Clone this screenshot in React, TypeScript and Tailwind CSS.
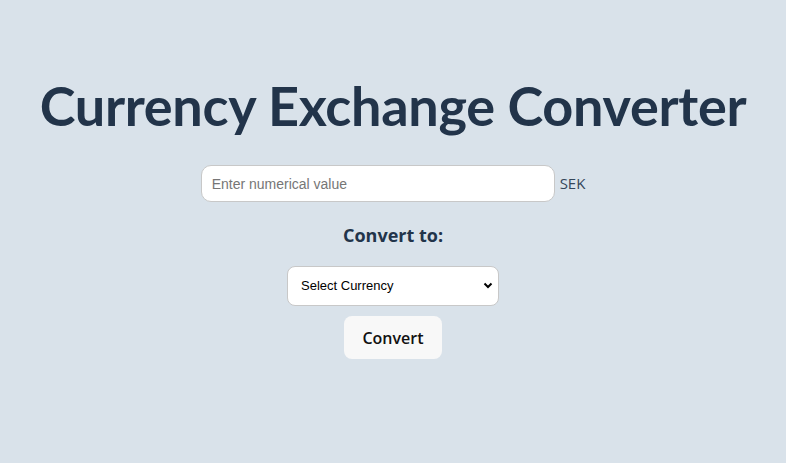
import React from "react";

export default function App() {
  return (
    <div className="min-h-[463px] w-full bg-[#d9e2ea] flex flex-col items-center text-[#22344a]" style={{ fontFamily: '"Open Sans", "Noto Sans", sans-serif' }}>
      <h1 className="mt-[67px] text-[54px] leading-[78px] font-bold tracking-[-0.3px] text-[#22344a]" style={{ fontFamily: 'Lato, "Open Sans", sans-serif' }}>Currency Exchange Converter</h1>
      <div className="mt-[20px] flex items-center">
        <input
          type="text"
          placeholder="Enter numerical value"
          className="w-[354px] h-[37px] rounded-[10px] border border-[#c8c8c8] bg-white px-[10px] text-[14px] placeholder:text-[#767676] outline-none"
          style={{ fontFamily: '"Liberation Sans", Arial, sans-serif' }}
        />
        <span className="ml-[5px] text-[15px] text-[#34465a]">SEK</span>
      </div>
      <div className="mt-[20px] text-[18px] font-bold leading-[26px]">Convert to:</div>
      <div className="mt-[18px] relative w-[212px] h-[40px]">
        <select
          className="appearance-none w-full h-full rounded-[8px] border border-[#c8c8c8] bg-white pl-[13px] text-[13px] text-black outline-none"
          style={{ fontFamily: '"Liberation Sans", Arial, sans-serif' }}
        >
          <option>Select Currency</option>
        </select>
        <svg className="pointer-events-none absolute right-[6px] top-[16px]" width="10" height="7" viewBox="0 0 10 7">
          <path d="M1.5 1.5 L5 5 L8.5 1.5" stroke="#000" strokeWidth="2" fill="none" />
        </svg>
      </div>
      <button className="mt-[10px] w-[98px] h-[43px] rounded-[8px] bg-[#f8f8f8] text-[16px] font-semibold text-[#111]">Convert</button>
    </div>
  );
}
